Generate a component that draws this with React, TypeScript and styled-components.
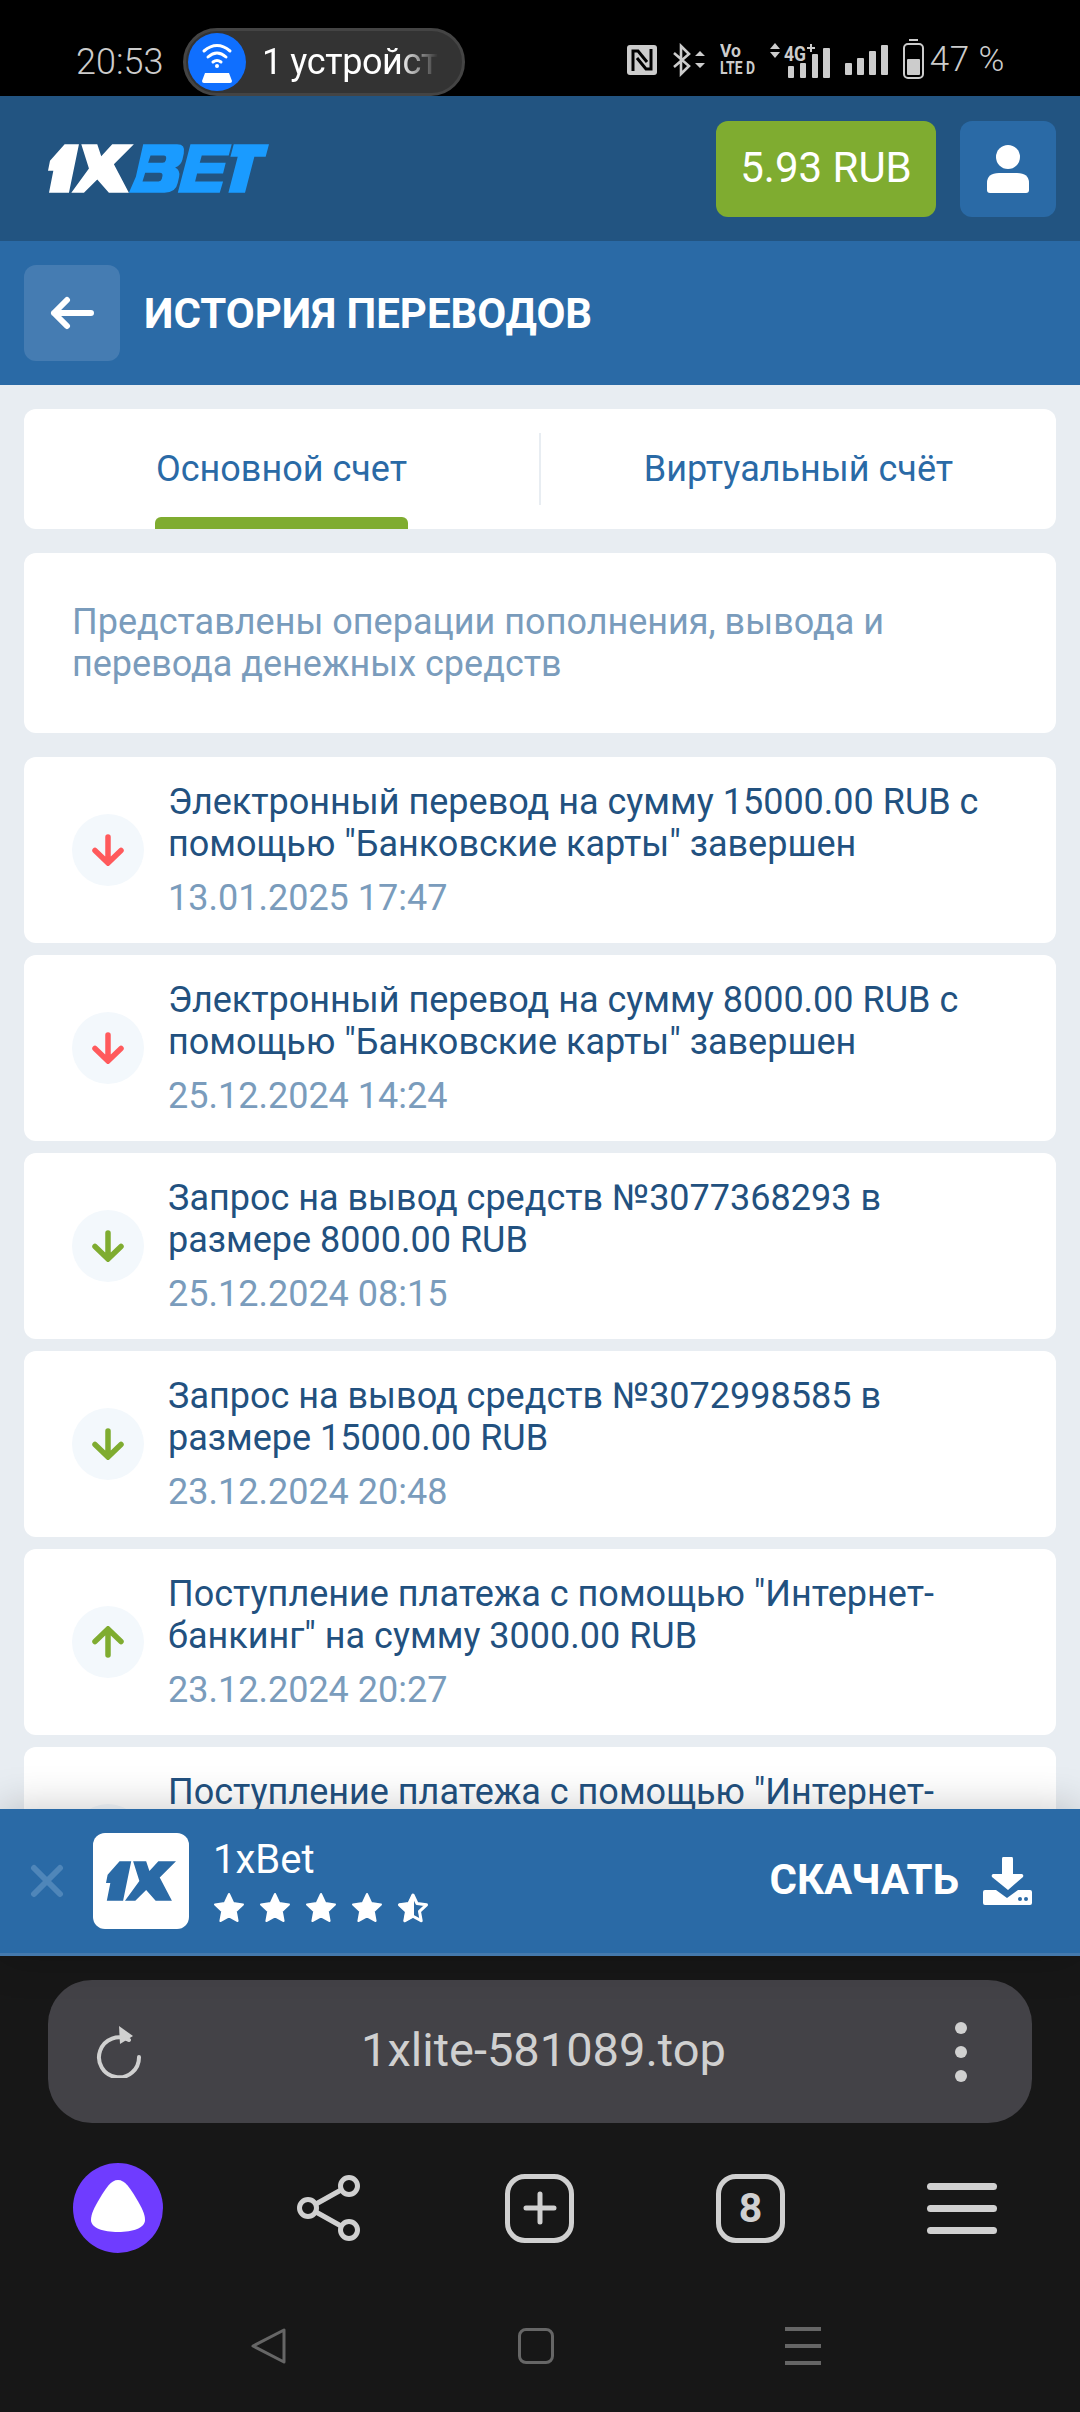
import * as React from 'react';
import styled, { createGlobalStyle } from 'styled-components';

const GlobalStyle = createGlobalStyle`
  html, body {
    margin: 0;
    padding: 0;
    width: 1080px;
    height: 2412px;
    overflow: hidden;
    background: #000;
  }
  * { box-sizing: border-box; }
  body { font-family: Roboto, "Liberation Sans", sans-serif; }
`;

type Operation = {
  text: string;
  date: string;
  kind: 'out' | 'down' | 'up';
};

const operations: Operation[] = [
  { text: 'Электронный перевод на сумму 15000.00 RUB с помощью "Банковские карты" завершен', date: '13.01.2025 17:47', kind: 'out' },
  { text: 'Электронный перевод на сумму 8000.00 RUB с помощью "Банковские карты" завершен', date: '25.12.2024 14:24', kind: 'out' },
  { text: 'Запрос на вывод средств №3077368293 в размере 8000.00 RUB', date: '25.12.2024 08:15', kind: 'down' },
  { text: 'Запрос на вывод средств №3072998585 в размере 15000.00 RUB', date: '23.12.2024 20:48', kind: 'down' },
  { text: 'Поступление платежа с помощью "Интернет-банкинг" на сумму 3000.00 RUB', date: '23.12.2024 20:27', kind: 'up' },
  { text: 'Поступление платежа с помощью "Интернет-банкинг" на сумму 3000.00 RUB', date: '23.12.2024 20:20', kind: 'up' },
];

const Mark1X = ({ fill }: { fill: string }) => (
  <g fill={fill}>
    <polygon points="104,42 147,42 117,188 57,188 70,122 54,122 60,92" />
    <polygon points="154,42 202,42 214,78 247,42 312,42 252,102 297,188 237,188 202,148 162,188 124,188 177,115" />
  </g>
);

const Logo = () => (
  <LogoSvg viewBox="54 42 664 146">
    <Mark1X fill="#fff" />
    <path
      fill="#1a9bff"
      fillRule="evenodd"
      d="M340 42H442Q468 42 462 70L458 88Q454 106 436 112Q452 120 448 140L444 158Q438 188 404 188H297L318 140ZM362 76L355 98H398Q406 98 408 90L409 85Q410 76 402 76ZM346 128L338 154H386Q394 154 396 146L398 137Q399 128 390 128Z"
    />
    <polygon fill="#1a9bff" points="482,42 606,42 597,76 516,76 510,98 588,98 580,130 502,130 496,154 580,154 570,188 444,188" />
    <polygon fill="#1a9bff" points="612,42 718,42 708,80 674,80 646,188 596,188 624,80 602,80" />
  </LogoSvg>
);

const LogoSvg = styled.svg`
  width: 221px;
  height: 49px;
  display: block;
`;

const DirectionArrow = ({ kind }: { kind: Operation['kind'] }) => (
  <ArrowSvg viewBox="0 0 32 32" $kind={kind}>
    <path d="M16 3V28M3 16.5L16 29L29 16.5" />
  </ArrowSvg>
);

const ArrowSvg = styled.svg<{ $kind: Operation['kind'] }>`
  width: 32px;
  height: 32px;
  fill: none;
  stroke: ${p => (p.$kind === 'out' ? '#ff5a5c' : '#7fac30')};
  stroke-width: 5.5;
  stroke-linecap: round;
  stroke-linejoin: miter;
  transform: ${p => (p.$kind === 'up' ? 'rotate(180deg)' : 'none')};
`;

const Star = ({ half }: { half?: boolean }) => (
  <StarSvg viewBox="0 0 32 32">
    {half ? (
      <>
        <path d="M16 3L20 11.5L29.5 12.8L22.5 19.4L24.2 28.8L16 24.2L7.8 28.8L9.5 19.4L2.5 12.8L12 11.5Z" fill="none" stroke="#fff" strokeWidth="3" strokeLinejoin="round" />
        <path d="M16 3L12 11.5L2.5 12.8L9.5 19.4L7.8 28.8L16 24.2Z" fill="#fff" stroke="#fff" strokeWidth="2" strokeLinejoin="round" />
      </>
    ) : (
      <path d="M16 2L20.2 11L30 12.4L22.8 19.2L24.6 29L16 24.3L7.4 29L9.2 19.2L2 12.4L11.8 11Z" fill="#fff" stroke="#fff" strokeWidth="2" strokeLinejoin="round" />
    )}
  </StarSvg>
);

const StarSvg = styled.svg`
  width: 32px;
  height: 32px;
  display: block;
`;

const StatusIcons = () => (
  <StatusIconRow>
    <svg width="30" height="30" viewBox="0 0 30 30">
      <rect width="30" height="30" rx="3" fill="#ccc" />
      <path d="M6 26V6H11L20 17M24 4V24H19L10 13" fill="none" stroke="#000" strokeWidth="3" />
    </svg>
    <svg width="33" height="34" viewBox="0 0 33 34">
      <path d="M2 10L17 23L9 31V3L17 11L2 24" fill="none" stroke="#ccc" strokeWidth="2.6" />
      <path d="M23 13L28 8L33 13ZM23 20H33L28 25Z" fill="#ccc" />
    </svg>
    <svg width="35" height="32" viewBox="0 0 35 32">
      <text x="0" y="14" fontFamily="Roboto, sans-serif" fontWeight="700" fontSize="19" textLength="21" lengthAdjust="spacingAndGlyphs" fill="#ccc">Vo</text>
      <text x="0" y="31" fontFamily="Roboto, sans-serif" fontWeight="700" fontSize="19" textLength="35" lengthAdjust="spacingAndGlyphs" fill="#ccc">LTE D</text>
    </svg>
    <svg width="60" height="36" viewBox="0 0 60 36">
      <path d="M0 6L5 0L10 6ZM0 9H10L5 15Z" fill="#ccc" />
      <text x="14" y="18" fontFamily="Roboto, sans-serif" fontWeight="700" fontSize="20" textLength="22" lengthAdjust="spacingAndGlyphs" fill="#ccc">4G</text>
      <path d="M37 5H45M41 1V9" stroke="#ccc" strokeWidth="2" />
      <rect x="18" y="23" width="6" height="12" rx="1" fill="#ccc" />
      <rect x="30" y="20" width="6" height="15" rx="1" fill="#ccc" />
      <rect x="42" y="11" width="6" height="24" rx="1" fill="#ccc" />
      <rect x="53" y="5" width="7" height="30" rx="1" fill="#ccc" />
    </svg>
    <svg width="43" height="30" viewBox="0 0 43 30">
      <rect x="0" y="18" width="7" height="12" rx="1" fill="#ccc" />
      <rect x="12" y="13" width="7" height="17" rx="1" fill="#ccc" />
      <rect x="24" y="6" width="7" height="24" rx="1" fill="#ccc" />
      <rect x="36" y="0" width="7" height="30" rx="1" fill="#ccc" />
    </svg>
    <svg width="21" height="40" viewBox="0 0 21 40">
      <rect x="6" y="0" width="9" height="2" fill="#ccc" />
      <rect x="1" y="5" width="19" height="34" rx="4" fill="none" stroke="#ccc" strokeWidth="2" />
      <rect x="4" y="20" width="13" height="16" rx="1" fill="#ccc" />
    </svg>
  </StatusIconRow>
);

export default function App() {
  return (
    <Screen>
      <GlobalStyle />
      <StatusBar>
        <Clock>20:53</Clock>
        <HotspotPill>
          <HotspotBadge>
            <svg width="58" height="58" viewBox="0 0 58 58" fill="none" stroke="#fff" strokeLinecap="round">
              <path d="M16 18Q29 7 42 18" strokeWidth="3" />
              <path d="M20 24Q29 16 38 24" strokeWidth="3" />
              <path d="M25 29Q29 26 33 29" strokeWidth="3" />
              <circle cx="29" cy="33" r="2" fill="#fff" stroke="none" />
              <path d="M17 40H41L44 48Q44 50 42 50H16Q14 50 14 48Z" fill="#fff" stroke="none" />
            </svg>
          </HotspotBadge>
          <HotspotText>1 устройст</HotspotText>
        </HotspotPill>
        <StatusRight>
          <StatusIcons />
          <BatteryText>47 %</BatteryText>
        </StatusRight>
      </StatusBar>

      <Header>
        <Logo />
        <HeaderActions>
          <Balance>5.93 RUB</Balance>
          <ProfileButton>
            <svg width="42" height="48" viewBox="0 0 42 48" fill="#fff">
              <circle cx="21" cy="12" r="12" />
              <path d="M0 38Q0 28 12 28H30Q42 28 42 38V45Q42 48 39 48H3Q0 48 0 45Z" />
            </svg>
          </ProfileButton>
        </HeaderActions>
      </Header>

      <TitleBar>
        <BackButton>
          <svg width="44" height="34" viewBox="0 0 44 34" fill="none" stroke="#fff" strokeWidth="6" strokeLinecap="round" strokeLinejoin="round">
            <path d="M41 17H4M17 4L4 17L17 30" />
          </svg>
        </BackButton>
        <PageTitle>ИСТОРИЯ ПЕРЕВОДОВ</PageTitle>
      </TitleBar>

      <Content>
        <TabsCard>
          <Tab><TabLabel $active>Основной счет</TabLabel></Tab>
          <TabDivider />
          <Tab><TabLabel>Виртуальный счёт</TabLabel></Tab>
        </TabsCard>

        <InfoCard>Представлены операции пополнения, вывода и перевода денежных средств</InfoCard>

        <RowList>
          {operations.map(op => (
            <Row key={op.text + op.date}>
              <IconCircle><DirectionArrow kind={op.kind} /></IconCircle>
              <RowBody>
                <RowText>{op.text}</RowText>
                <RowDate>{op.date}</RowDate>
              </RowBody>
            </Row>
          ))}
        </RowList>
      </Content>

      <AppBanner>
        <CloseMark>
          <svg width="34" height="34" viewBox="0 0 34 34" stroke="#4f86b9" strokeWidth="6" strokeLinecap="round">
            <path d="M4 4L30 30M30 4L4 30" />
          </svg>
        </CloseMark>
        <AppIcon>
          <svg width="70" height="40" viewBox="54 42 258 146"><Mark1X fill="#2a6aa6" /></svg>
        </AppIcon>
        <AppInfo>
          <AppName>1xBet</AppName>
          <Stars>
            <Star /><Star /><Star /><Star /><Star half />
          </Stars>
        </AppInfo>
        <DownloadLink>
          <span>СКАЧАТЬ</span>
          <svg width="49" height="48" viewBox="0 0 49 48">
            <path d="M20 0H29Q30 0 30 2V17H39Q41 18 40 20L25 33L9 20Q8 18 10 17H19V2Q19 0 20 0Z" fill="#fff" />
            <path d="M2 33H13L24 41L35 33H47Q49 33 49 35V46Q49 48 47 48H2Q0 48 0 46V35Q0 33 2 33Z" fill="#fff" />
            <circle cx="37" cy="42" r="2" fill="#2a6aa6" />
            <circle cx="43" cy="42" r="2" fill="#2a6aa6" />
          </svg>
        </DownloadLink>
      </AppBanner>

      <BrowserChrome>
        <UrlBar>
          <svg width="46" height="52" viewBox="0 0 46 52" fill="none">
            <path d="M34 14A20 20 0 1 0 44 31" stroke="#d0d0d0" strokeWidth="4" strokeLinecap="round" transform="translate(-1 0)" />
            <path d="M23 0L37 10L24 18Z" fill="#d0d0d0" />
          </svg>
          <UrlText>1xlite-581089.top</UrlText>
          <UrlDots><i /><i /><i /></UrlDots>
        </UrlBar>

        <BrowserNav>
          <AliceButton>
            <svg width="54" height="52" viewBox="0 0 54 52">
              <path d="M27 0C34 0 39 8 45 18C51 28 54 34 54 40C54 48 42 52 27 52C12 52 0 48 0 40C0 34 3 28 9 18C15 8 20 0 27 0Z" fill="#fff" />
            </svg>
          </AliceButton>
          <svg width="63" height="66" viewBox="0 0 63 66" fill="none" stroke="#d0d0d0" strokeWidth="5">
            <circle cx="11" cy="33" r="8.5" />
            <circle cx="52" cy="11" r="8.5" />
            <circle cx="52" cy="55" r="8.5" />
            <path d="M19 29L44 15M19 37L44 51" />
          </svg>
          <ChromeSquare>
            <svg width="34" height="34" viewBox="0 0 34 34" stroke="#d0d0d0" strokeWidth="5" strokeLinecap="round">
              <path d="M17 3V31M3 17H31" />
            </svg>
          </ChromeSquare>
          <ChromeSquare>8</ChromeSquare>
          <MenuLines $size="big"><i /><i /><i /></MenuLines>
        </BrowserNav>

        <GestureBar>
          <svg width="36" height="36" viewBox="0 0 36 36" fill="none" stroke="#666" strokeWidth="3" strokeLinejoin="round">
            <path d="M33 2V34L2 18Z" />
          </svg>
          <HomeKey />
          <MenuLines $size="small"><i /><i /><i /></MenuLines>
        </GestureBar>
      </BrowserChrome>
    </Screen>
  );
}

const Screen = styled.div`
  width: 1080px;
  height: 2412px;
  display: flex;
  flex-direction: column;
  overflow: hidden;
  background: #e8edf2;
`;

const StatusBar = styled.div`
  height: 96px;
  flex: none;
  background: #000;
  display: flex;
  align-items: flex-end;
  padding: 0 75px 0 76px;
  color: #ccc;
`;

const Clock = styled.div`
  width: 107px;
  font-size: 36px;
  font-weight: 300;
  line-height: 48px;
  padding-bottom: 10px;
`;

const HotspotPill = styled.div`
  width: 282px;
  height: 68px;
  border: 3px solid #444;
  border-radius: 34px;
  background: #333;
  display: flex;
  align-items: center;
  padding-left: 2px;
`;

const HotspotBadge = styled.div`
  width: 58px;
  height: 58px;
  border-radius: 50%;
  background: #0f6fff;
`;

const HotspotText = styled.div`
  margin-left: 16px;
  white-space: nowrap;
  color: #fff;
  font-size: 36px;
  letter-spacing: -0.4px;
  -webkit-mask-image: linear-gradient(90deg, #000 78%, transparent 100%);
  mask-image: linear-gradient(90deg, #000 78%, transparent 100%);
`;

const StatusRight = styled.div`
  margin-left: auto;
  display: flex;
  align-items: center;
  height: 96px;
  padding-top: 22px;
  gap: 6px;
`;

const StatusIconRow = styled.div`
  display: flex;
  align-items: flex-end;
  gap: 15px;
  height: 40px;

  & > svg:nth-child(1), & > svg:nth-child(3), & > svg:nth-child(5) { margin-bottom: 4px; }
  & > svg:nth-child(2) { margin-bottom: 2px; }
`;

const BatteryText = styled.div`
  font-size: 35px;
  font-weight: 300;
  letter-spacing: 0.5px;
  white-space: nowrap;
`;

const Header = styled.header`
  height: 145px;
  flex: none;
  background: #225481;
  display: flex;
  align-items: center;
  justify-content: space-between;
  padding: 0 24px 0 48px;
`;

const HeaderActions = styled.div`
  display: flex;
  gap: 24px;
`;

const Balance = styled.div`
  width: 220px;
  height: 96px;
  border-radius: 12px;
  background: #7fac30;
  color: #fff;
  font-size: 42px;
  display: flex;
  align-items: center;
  justify-content: center;
  padding-bottom: 2px;
`;

const ProfileButton = styled.div`
  width: 96px;
  height: 96px;
  border-radius: 12px;
  background: #2a6aa6;
  display: flex;
  align-items: center;
  justify-content: center;
`;

const TitleBar = styled.div`
  height: 144px;
  flex: none;
  background: #2a6aa6;
  display: flex;
  align-items: center;
  padding-left: 24px;
  gap: 24px;
`;

const BackButton = styled.div`
  width: 96px;
  height: 96px;
  border-radius: 12px;
  background: #457cb2;
  display: flex;
  align-items: center;
  justify-content: center;
`;

const PageTitle = styled.h1`
  margin: 0;
  color: #fff;
  font-size: 42px;
  font-weight: 700;
  white-space: nowrap;
`;

const Content = styled.main`
  flex: 1;
  min-height: 0;
  overflow: hidden;
  padding: 24px;
  display: flex;
  flex-direction: column;
  gap: 24px;
`;

const Card = styled.div`
  background: #fff;
  border-radius: 12px;
  flex: none;
`;

const TabsCard = styled(Card)`
  height: 120px;
  display: flex;
  overflow: hidden;
`;

const Tab = styled.div`
  flex: 1;
  display: flex;
  justify-content: center;
`;

const TabLabel = styled.div<{ $active?: boolean }>`
  position: relative;
  height: 120px;
  line-height: 120px;
  padding: 0 1px;
  font-size: 36px;
  color: #2a6aa6;

  &::after {
    content: '';
    display: ${p => (p.$active ? 'block' : 'none')};
    position: absolute;
    left: 0;
    right: 0;
    bottom: 0;
    height: 12px;
    border-radius: 6px 6px 0 0;
    background: #7fac30;
  }
`;

const TabDivider = styled.div`
  flex: none;
  width: 2px;
  height: 72px;
  margin-top: 24px;
  background: #e8edf2;
`;

const InfoCard = styled(Card)`
  padding: 48px;
  font-size: 36px;
  line-height: 42px;
  color: #7a9cbc;
`;

const RowList = styled.div`
  display: flex;
  flex-direction: column;
  gap: 12px;
`;

const Row = styled(Card)`
  display: flex;
  align-items: center;
  gap: 24px;
  padding: 24px 48px;
`;

const IconCircle = styled.div`
  width: 72px;
  height: 72px;
  flex: none;
  border-radius: 50%;
  background: #f3f8fc;
  display: flex;
  align-items: center;
  justify-content: center;
`;

const RowBody = styled.div`
  min-width: 0;
`;

const RowText = styled.div`
  font-size: 36px;
  line-height: 42px;
  color: #22517f;
`;

const RowDate = styled.div`
  margin-top: 12px;
  font-size: 36px;
  line-height: 42px;
  color: #7a9cbc;
`;

const AppBanner = styled.div`
  position: relative;
  height: 147px;
  flex: none;
  background: #2a6aa6;
  border-bottom: 3px solid #4479ad;
  box-shadow: 0 0 40px rgba(0, 0, 0, 0.22);
  display: flex;
  align-items: center;
  padding: 0 48px 0 30px;
  color: #fff;
`;

const CloseMark = styled.div`
  width: 34px;
  height: 34px;
  margin-right: 29px;
`;

const AppIcon = styled.div`
  width: 96px;
  height: 96px;
  border-radius: 12px;
  background: #fff;
  display: flex;
  align-items: center;
  justify-content: center;
`;

const AppInfo = styled.div`
  margin-left: 24px;
  display: flex;
  flex-direction: column;
  gap: 10px;
`;

const AppName = styled.div`
  font-size: 40px;
  line-height: 44px;
`;

const Stars = styled.div`
  display: flex;
  gap: 14px;
`;

const DownloadLink = styled.div`
  margin-left: auto;
  display: flex;
  align-items: center;
  gap: 24px;
  font-size: 42px;
  font-weight: 700;

  & > span {
    padding-bottom: 3px;
  }
`;

const BrowserChrome = styled.div`
  flex: none;
  height: 456px;
  background: #171717;
  padding: 24px 48px 0;
  display: flex;
  flex-direction: column;
`;

const UrlBar = styled.div`
  height: 143px;
  border-radius: 44px;
  background: #434247;
  display: flex;
  align-items: center;
  justify-content: space-between;
  padding: 0 65px 0 48px;
`;

const UrlText = styled.div`
  font-size: 47px;
  font-weight: 400;
  color: #d0d0d0;
  padding-bottom: 5px;
  margin-right: 10px;
`;

const UrlDots = styled.div`
  display: flex;
  flex-direction: column;
  gap: 12px;

  & > i {
    display: block;
    width: 12px;
    height: 12px;
    border-radius: 50%;
    background: #d0d0d0;
  }
`;

const BrowserNav = styled.div`
  margin: 40px -36px 0;
  height: 90px;
  display: grid;
  grid-template-columns: repeat(5, 211px);
  align-items: center;
  justify-items: center;
`;

const AliceButton = styled.div`
  width: 90px;
  height: 90px;
  border-radius: 50%;
  background: #6f3cff;
  display: flex;
  align-items: center;
  justify-content: center;
  padding-bottom: 4px;
`;

const ChromeSquare = styled.div`
  width: 69px;
  height: 69px;
  border: 5px solid #d0d0d0;
  border-radius: 20px;
  display: flex;
  align-items: center;
  justify-content: center;
  color: #d0d0d0;
  font-size: 41px;
  font-weight: 700;
`;

const MenuLines = styled.div<{ $size: 'big' | 'small' }>`
  width: ${p => (p.$size === 'big' ? 70 : 36)}px;
  display: flex;
  flex-direction: column;
  gap: ${p => (p.$size === 'big' ? 15 : 13)}px;

  & > i {
    display: block;
    height: ${p => (p.$size === 'big' ? 7 : 4)}px;
    border-radius: ${p => (p.$size === 'big' ? 4 : 0)}px;
    background: ${p => (p.$size === 'big' ? '#d0d0d0' : '#666')};
  }
`;

const GestureBar = styled.div`
  margin-top: 74px;
  display: flex;
  align-items: center;
  padding-left: 203px;
  gap: 231px;
`;

const HomeKey = styled.div`
  width: 36px;
  height: 36px;
  border: 3px solid #666;
  border-radius: 8px;
`;
